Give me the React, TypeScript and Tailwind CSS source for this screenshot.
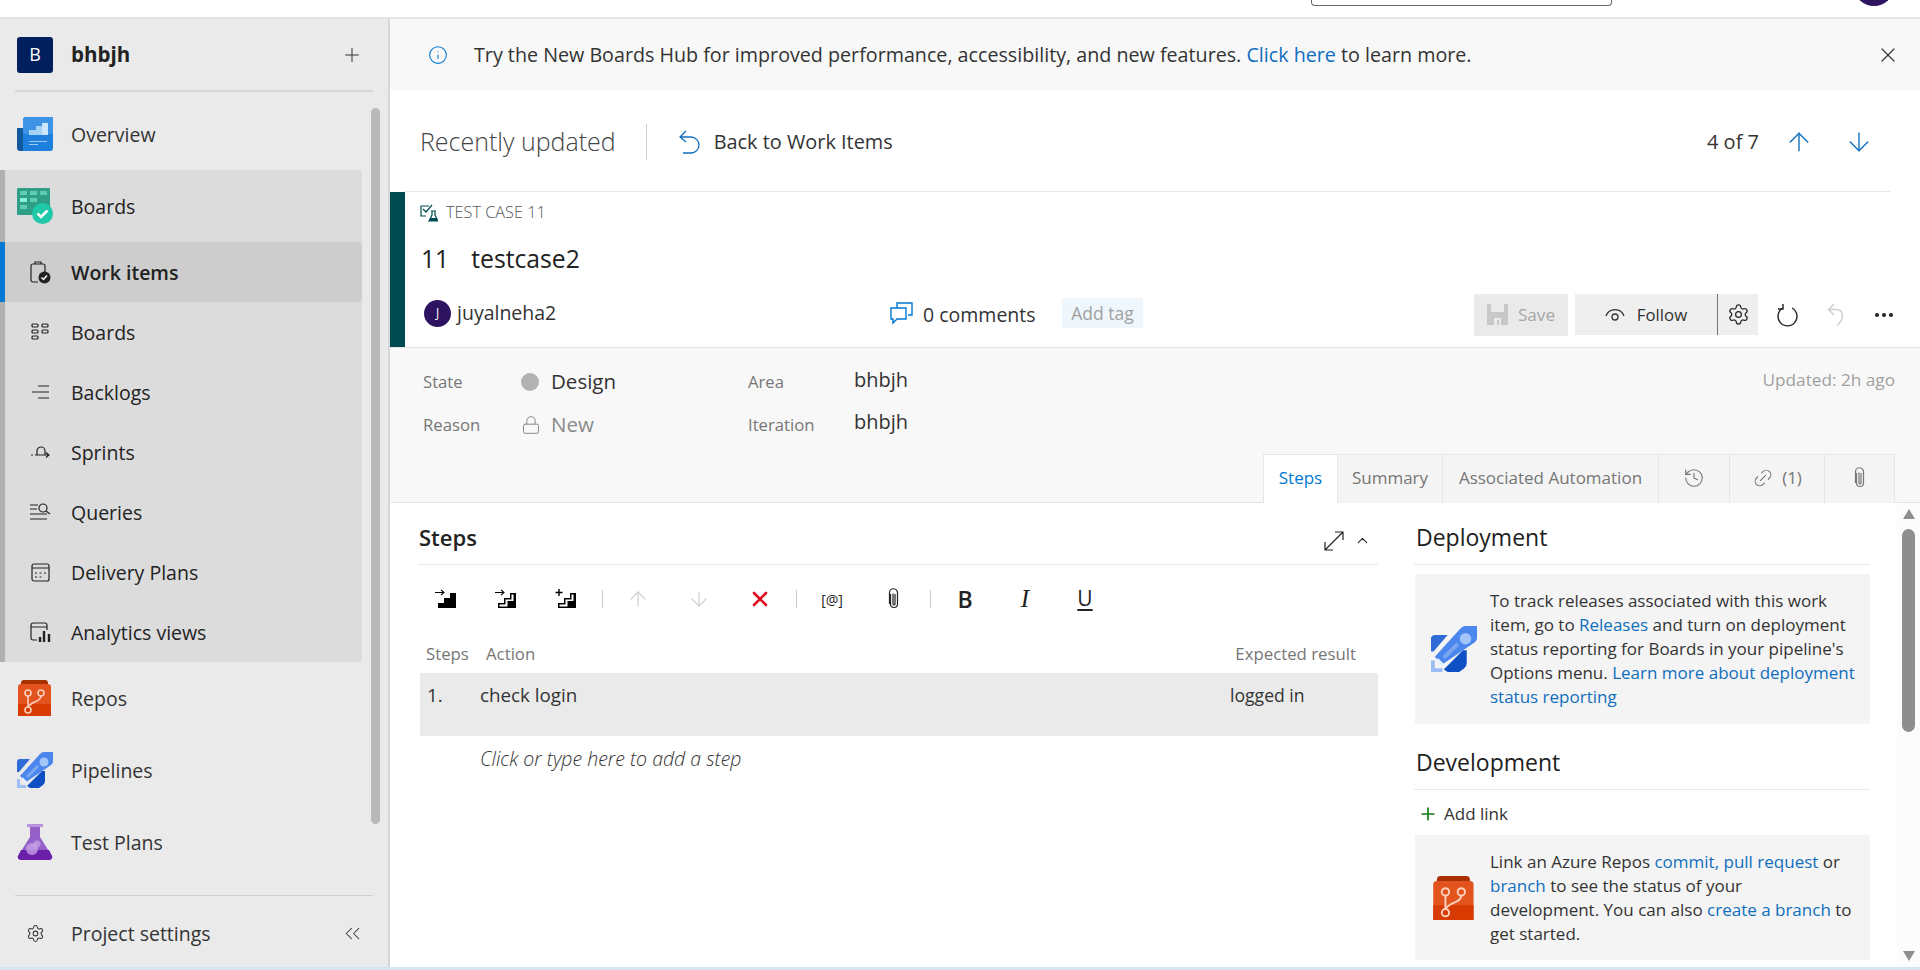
import React from "react";
import { ArrowUp, ArrowDown, ChevronUp, ChevronsLeft, History, Info, Link2, Lock, Plus, Settings, X } from "lucide-react";

const OverviewLogo = () => (
  <svg width="36" height="34" viewBox="0 0 36 34">
    <path d="M0 11h6v23H3a3 3 0 0 1-3-3z" fill="#125a9e" />
    <path d="M6 3a3 3 0 0 1 3-3h27v31a3 3 0 0 1-3 3H6z" fill="#1f7fdc" />
    <path d="M6 3a3 3 0 0 1 3-3h27v17H6z" fill="#3d93e6" />
    <path d="M12 13h7v5h-7zM19 9h6v9h-6z" fill="#a6d2f6" />
    <path d="M25 6h6v12h-6z" fill="#cde6fb" />
    <path d="M12 24h18v1H12zM12 27h9v1h-9z" fill="#9ccbf2" />
  </svg>
);

const BoardsLogo = () => (
  <svg width="36" height="36" viewBox="0 0 36 36">
    <rect width="33" height="27" rx="1" fill="#2f9e86" />
    <path d="M3 3h7v4H3zM13 3h7v4h-7zM23 3h7v4h-7z" fill="#5fcdb4" />
    <path d="M3 10h7v4H3z" fill="#8ef0d8" />
    <path d="M13 10h7v4h-7zM3 17h7v4H3z" fill="#5fcdb4" />
    <circle cx="25.5" cy="25.5" r="10.5" fill="#1fc8a8" />
    <path d="M20.5 25.5l3.5 3.5 6.5-6.5" stroke="#fff" strokeWidth="2.6" fill="none" />
  </svg>
);

const ReposLogo = ({ size = 36 }: { size?: number }) => (
  <svg width={size} height={size} viewBox="0 0 36 36">
    <path d="M4 3a3 3 0 0 1 3-3h21a3 3 0 0 1 3 3v4H4z" fill="#a93000" />
    <path d="M1 7a3 3 0 0 1 3-3h27a3 3 0 0 1 3 3v29H1z" fill="#e2531e" />
    <path d="M1 24h33v12H1z" fill="#d83b01" />
    <g stroke="#fbd0bd" strokeWidth="1.6" fill="none">
      <circle cx="11" cy="13" r="3" />
      <circle cx="24" cy="13" r="3" />
      <circle cx="11" cy="30" r="3" />
      <path d="M11 16v11M24 16c0 6-9 5-12 10" />
    </g>
  </svg>
);

const PipelinesLogo = ({ size = 36 }: { size?: number }) => (
  <svg width={size} height={size} viewBox="0 0 36 36">
    <path d="M0 9a3 3 0 0 1 3-2h10L2 20H0z" fill="#2f6bd4" />
    <path d="M13 36l-3-2 15-15h3v10a5 5 0 0 1-2 4l-4 3z" fill="#0f4fc4" />
    <path d="M9 30l-6-6L23 2a5 5 0 0 1 4-2h9v10a5 5 0 0 1-2 3z" fill="#4a86ee" />
    <circle cx="27" cy="10" r="4.5" fill="#a3c4f7" />
    <path d="M10 25l11-11" stroke="#7aa6f0" strokeWidth="3" />
    <path d="M0 27h3v6h6v3H0z" fill="#9cbcf5" />
    <path d="M5 26l5 5" stroke="#e6efff" strokeWidth="2" />
  </svg>
);

const TestPlansLogo = () => (
  <svg width="36" height="36" viewBox="0 0 36 36">
    <path d="M10 0h16v3H10z" fill="#b794e0" />
    <path d="M13 3h10v10l12 19a3 3 0 0 1-3 4H4a3 3 0 0 1-3-4l12-19z" fill="#9560c8" />
    <path d="M4 26h28l3 6a3 3 0 0 1-3 4H4a3 3 0 0 1-3-4z" fill="#6a1fa8" />
    <circle cx="15" cy="25" r="6" fill="#c9a6ea" opacity="0.75" />
    <circle cx="20" cy="20" r="3.5" fill="#c9a6ea" opacity="0.7" />
  </svg>
);

const StairIcon = ({ mode }: { mode: "insert" | "insertOutline" | "add" }) => (
  <svg width="22" height="20" viewBox="0 0 22 20">
    {mode === "add" ? (
      <path d="M4 0v7M.5 3.500h7" stroke="#000" strokeWidth="1.4" />
    ) : (
      <path d="M0 3.500h9M6 .8l3 2.700-3 2.700" stroke="#000" strokeWidth="1.1" fill="none" />
    )}
    {mode === "insert" ? (
      <path d="M3 19v-5h6V9h6V4h6v15z" fill="#000" />
    ) : (
      <>
        <path d="M3 19v-5h6V9h6V4h6v15z" fill="#000" />
        <path d="M4.500 17.500v-2h6v-5h6V5.500h2V12h-6v5.500z" fill="#fff" />
      </>
    )}
  </svg>
);

const TestCaseIcon = () => (
  <svg width="18" height="18" viewBox="0 0 18 18" fill="none">
    <path d="M9 2H1v10h5" stroke="#004b50" strokeWidth="1.2" />
    <path d="M3 5l3 3 6-7" stroke="#004b50" strokeWidth="1.2" />
    <path d="M11 7h5M12 7v4l-3 6h9l-3-6V7" stroke="#004b50" strokeWidth="1.2" />
    <path d="M10 14h7v3h-7z" fill="#004b50" />
  </svg>
);

const WorkItemsIcon = () => (
  <svg width="21" height="23" viewBox="0 0 21 23" fill="none">
    <path d="M8 21H3a2 2 0 0 1-2-2V5a2 2 0 0 1 2-2h10a2 2 0 0 1 2 2v6" stroke="#222" strokeWidth="1.2" />
    <path d="M5 3V1h6v2" stroke="#222" strokeWidth="1.2" />
    <circle cx="14.500" cy="16.500" r="6" fill="#222" />
    <path d="M11.500 16.500l2 2 3.500-4" stroke="#fff" strokeWidth="1.500" />
  </svg>
);

const BoardsIcon = () => (
  <svg width="19" height="18" viewBox="0 0 19 18" fill="none" stroke="#222" strokeWidth="1.200">
    <rect x="1" y="1" width="6" height="3" rx="1" />
    <rect x="11" y="1" width="6" height="3" rx="1" />
    <rect x="1" y="7" width="6" height="3" rx="1" />
    <rect x="11" y="7" width="6" height="3" rx="1" />
    <rect x="1" y="13" width="6" height="3" rx="1" />
  </svg>
);

const BacklogsIcon = () => (
  <svg width="19" height="16" viewBox="0 0 19 16" stroke="#222" strokeWidth="1.200">
    <path d="M7 2h11M1 8h17M7 14h11" />
  </svg>
);

const SprintsIcon = () => (
  <svg width="20" height="14" viewBox="0 0 20 14" fill="none" stroke="#222" strokeWidth="1.200">
    <path d="M1 10h2M5 10h14M16 7.500l3 2.500-3 2.500M7 10V6a4 4 0 0 1 8 0v4" />
  </svg>
);

const QueriesIcon = () => (
  <svg width="21" height="18" viewBox="0 0 21 18" fill="none" stroke="#222" strokeWidth="1.200">
    <path d="M0 2h8M0 6h7M0 11h17M0 16h17" />
    <circle cx="13" cy="5" r="4" />
    <path d="M16 8l4 3" />
  </svg>
);

const DeliveryIcon = () => (
  <svg width="19" height="19" viewBox="0 0 19 19" fill="none" stroke="#222" strokeWidth="1.200">
    <rect x="1" y="1" width="17" height="17" rx="2" />
    <path d="M1 5h17M4 10h2M8.500 10h2M13 10h2M4 14h2M8.500 14h2" />
  </svg>
);

const AnalyticsIcon = () => (
  <svg width="21" height="21" viewBox="0 0 21 21" fill="none" stroke="#222" strokeWidth="1.200">
    <path d="M7 18H3a2 2 0 0 1-2-2V3a2 2 0 0 1 2-2h12a2 2 0 0 1 2 2v5M1 5h16" />
    <path d="M10 20v-5M14 20V9M19 20v-8" strokeWidth="2.400" />
  </svg>
);

const BackIcon = ({ className }: { className: string }) => (
  <svg className={className} width="22" height="25" viewBox="0 0 22 25" fill="none" stroke="currentColor" strokeWidth="1.300">
    <path d="M8 1L2 7l6 5M2 7h11a7.500 7.500 0 0 1 0 16H5" />
  </svg>
);

const UndoIcon = ({ className }: { className: string }) => (
  <svg className={className} width="18" height="24" viewBox="0 0 18 24" fill="none" stroke="currentColor" strokeWidth="1.500">
    <path d="M7 1L1.500 6.500 7 12M1.500 6.500H9c8 0 9 9 1 16" />
  </svg>
);

const ClipIcon = ({ className }: { className?: string }) => (
  <svg className={className} width="14" height="22" viewBox="0 0 14 22" fill="none" stroke="currentColor" strokeWidth="1.200">
    <path d="M3.500 6v10a3.500 3.500 0 0 0 7 0V5a4 4 0 0 0-8-.5V16" />
    <path d="M6 5.500V16a1 1 0 0 0 2 0V6" />
  </svg>
);

const SubItem = ({ icon, label, active }: { icon: React.ReactNode; label: string; active?: boolean }) => (
  <div
    className={`flex items-center h-[60px] rounded-r-sm ${
      active ? "bg-[#cdcdcd] font-semibold -ml-[5px] pl-[5px] border-l-[5px] border-[#0078d4]" : ""
    }`}
  >
    <div className={`w-[66px] flex justify-center pl-[4px] ${active ? "-ml-[5px]" : ""}`}>{icon}</div>
    <span className="text-[#222] pt-[2px]">{label}</span>
  </div>
);

const MainItem = ({ icon, label }: { icon: React.ReactNode; label: string }) => (
  <div className="flex items-center h-[72px]">
    <div className="w-[71px] pl-[17px]">{icon}</div>
    <span className="text-[#333] pt-[2px]">{label}</span>
  </div>
);

const Sidebar = () => (
  <aside className="relative w-[390px] shrink-0 bg-[#eaeaea] border-r-2 border-[#d6d6d6] flex flex-col text-[19.500px]">
    <div className="mx-[15px] h-[73px] flex items-center border-b-2 border-[#d6d6d6]">
      <div className="ml-[2px] w-[36px] h-[36px] rounded-[3px] bg-[#001f5c] text-white text-[18px] flex items-center justify-center">
        B
      </div>
      <span className="ml-[18px] text-[20.500px] font-bold text-[#222]">bhbjh</span>
      <Plus className="ml-auto mr-[10px] text-[#333]" size={22} strokeWidth={1.1} />
    </div>
    <div className="h-[78px] pt-[6px]">
      <MainItem icon={<OverviewLogo />} label="Overview" />
    </div>
    <div className="w-[362px] border-l-[5px] border-[#b0b0b0] bg-[#dcdcdc] rounded-r-sm">
      <div className="flex items-center h-[72px] -ml-[5px]">
        <div className="w-[71px] pl-[17px]">
          <BoardsLogo />
        </div>
        <span className="text-[#222] pt-[2px]">Boards</span>
      </div>
      <SubItem icon={<WorkItemsIcon />} label="Work items" active />
      <SubItem icon={<BoardsIcon />} label="Boards" />
      <SubItem icon={<BacklogsIcon />} label="Backlogs" />
      <SubItem icon={<SprintsIcon />} label="Sprints" />
      <SubItem icon={<QueriesIcon />} label="Queries" />
      <SubItem icon={<DeliveryIcon />} label="Delivery Plans" />
      <SubItem icon={<AnalyticsIcon />} label="Analytics views" />
    </div>
    <MainItem icon={<ReposLogo />} label="Repos" />
    <MainItem icon={<PipelinesLogo />} label="Pipelines" />
    <MainItem icon={<TestPlansLogo />} label="Test Plans" />
    <div className="mt-auto mx-[15px] h-[72px] pt-[4px] flex items-center border-t border-[#d0d0d0]">
      <Settings className="ml-[11px] text-[#333]" size={19} strokeWidth={1.3} />
      <span className="ml-[26px] text-[#333]">Project settings</span>
      <ChevronsLeft className="ml-auto mr-[8px] text-[#444]" size={25} strokeWidth={1} />
    </div>
    <div className="absolute left-[371px] top-[89px] w-[9px] h-[716px] rounded-full bg-[#b9b9b9]" />
  </aside>
);

const Tab = ({ children, width, active }: { children: React.ReactNode; width: string; active?: boolean }) => (
  <div
    className={`${width} h-[49px] pb-[2px] flex items-center justify-center gap-[8px] border-r border-t border-[#e6e6e6] ${
      active ? "bg-white text-[#0078d4] -mb-px" : "bg-[#f4f4f4] text-[#767676]"
    }`}
  >
    {children}
  </div>
);

const Toolbtn = ({ children, width = "w-[60px]" }: { children: React.ReactNode; width?: string }) => (
  <div className={`${width} flex justify-center items-center`}>{children}</div>
);

const Sep = () => <div className="ml-[6px] mr-[4px] w-px h-[18px] bg-[#c8c8c8]" />;

const WorkItem = () => (
  <>
    <div className="flex border-b border-[#e4e4e4] h-[156px] shrink-0">
      <div className="w-[15px] bg-[#004b50]" />
      <div className="flex-1 mr-[30px] border-t border-[#e8e8e8] -mt-px pl-[15px] flex flex-col">
        <div className="flex items-center gap-[8px] h-[37px] pt-[4px] text-[16.300px] font-light text-[#555]">
          <TestCaseIcon />
          TEST CASE 11
        </div>
        <div className="h-[57px] pt-[2px] flex items-center text-[24.700px] text-[#222]">
          <span className="ml-px">11</span>
          <span className="ml-[22px]">testcase2</span>
        </div>
        <div className="flex items-center h-[44px] text-[19.500px] mt-[5px]">
          <div className="ml-[4px] w-[27px] h-[27px] rounded-full bg-[#2e1460] text-white text-[12px] flex items-center justify-center">
            J
          </div>
          <span className="ml-[6px] w-[433px] text-[#333]">juyalneha2</span>
          <svg className="text-[#0078d4]" width="23" height="24" viewBox="0 0 23 24" fill="none" stroke="currentColor" strokeWidth="1.400">
            <path d="M7 7V2h15v12h-4" />
            <path d="M1 7h15v11H7l-4 4v-4H1z" fill="#fff" />
          </svg>
          <span className="ml-[10px] w-[139px] mt-[3px] text-[#333]">0 comments</span>
          <div className="w-[81px] h-[30px] bg-[#eff6fc] text-[#a0a0a0] text-[17.500px] flex items-center justify-center">
            Add tag
          </div>
          <div className="ml-auto flex items-center mt-[3px] -mr-[3px]">
            <div className="w-[94px] h-[42px] bg-[#eaeaea] flex items-center justify-center gap-[10px] text-[#a6a6a6] text-[17.200px]">
              <svg width="21" height="21" viewBox="0 0 21 21">
                <path d="M0 0h21v21H0z" fill="#c8c8c8" />
                <path d="M4 0h13v8H4zM7 14h7v7H7z" fill="#eaeaea" />
                <path d="M10 16h2v5h-2z" fill="#c8c8c8" />
              </svg>
              Save
            </div>
            <div className="ml-[7px] w-[143px] h-[41px] bg-[#efefef] border-r border-[#777] flex items-center justify-center gap-[12px] text-[#333] text-[16.800px]">
              <svg width="20" height="14" viewBox="0 0 20 14" fill="none" stroke="currentColor" strokeWidth="1.300">
                <path d="M1 8a9.500 9.500 0 0 1 18 0" />
                <circle cx="10" cy="9" r="3" />
              </svg>
              Follow
            </div>
            <div className="w-[40px] h-[41px] bg-[#efefef] flex items-center justify-center">
              <Settings size={23} strokeWidth={1.3} className="text-[#222]" />
            </div>
            <svg className="ml-[19px] text-[#222]" width="22" height="24" viewBox="0 0 22 24" fill="none" stroke="currentColor" strokeWidth="1.400">
              <path d="M15 5a9.500 9.500 0 1 1-9 0" />
              <path d="M6 1v5H1" />
            </svg>
            <UndoIcon className="ml-[28px] text-[#cfcfcf]" />
            <svg className="ml-[30px]" width="18" height="4" viewBox="0 0 18 4" fill="#222">
              <circle cx="2" cy="2" r="2" />
              <circle cx="9" cy="2" r="2" />
              <circle cx="16" cy="2" r="2" />
            </svg>
          </div>
        </div>
      </div>
    </div>
    <div className="bg-[#f8f8f8] h-[155px] shrink-0 border-b border-[#e4e4e4] flex flex-col">
      <div className="flex pl-[33px] pr-[25px] h-[106px] pt-[12px] text-[16.700px] text-[#767676]">
        <div className="grid grid-cols-[98px_227px_106px_auto] grid-rows-[43px_43px] items-center h-fit">
          <span>State</span>
          <span className="flex items-center gap-[12px] text-[20.500px] text-[#333]">
            <span className="w-[18px] h-[18px] rounded-full bg-[#b2b2b2]" />
            Design
          </span>
          <span>Area</span>
          <span className="text-[20px] text-[#333] -mt-[4px]">bhbjh</span>
          <span>Reason</span>
          <span className="flex items-center gap-[10px] text-[20.500px] text-[#8a8a8a]">
            <Lock size={20} strokeWidth={1.2} />
            New
          </span>
          <span>Iteration</span>
          <span className="text-[20px] text-[#333] -mt-[5px]">bhbjh</span>
        </div>
        <span className="ml-auto text-[#a0a0a0] text-[17.200px] mt-[7px] h-fit">Updated: 2h ago</span>
      </div>
      <div className="flex justify-end pr-[25px] text-[17px] h-[48px]">
        <Tab width="w-[75px] border-l" active>
          Steps
        </Tab>
        <Tab width="w-[105px]">Summary</Tab>
        <Tab width="w-[216px]">Associated Automation</Tab>
        <Tab width="w-[71px]">
          <History size={22} strokeWidth={1.2} />
        </Tab>
        <Tab width="w-[95px]">
          <Link2 size={22} strokeWidth={1.2} className="-rotate-45" />
          (1)
        </Tab>
        <Tab width="w-[70px]">
          <ClipIcon />
        </Tab>
      </div>
    </div>
  </>
);

const StepsPanel = () => (
  <div className="w-[960px] ml-[28px] shrink-0">
    <div className="h-[62px] border-b border-[#e8e8e8] flex items-center pt-[8px] text-[#222]">
      <span className="text-[22px] font-semibold ml-px">Steps</span>
      <svg className="ml-auto mt-[6px]" width="20" height="20" viewBox="0 0 20 20" fill="none" stroke="#222" strokeWidth="1.200">
        <path d="M1 19L19 1M11 1h8v8M1 11v8h8" />
      </svg>
      <ChevronUp className="ml-[10px] mr-[7px] mt-[6px]" size={17} strokeWidth={1.5} />
    </div>
    <div className="h-[66px] flex items-center -ml-[2px] pt-[2px]">
      <Toolbtn><StairIcon mode="insert" /></Toolbtn>
      <Toolbtn><StairIcon mode="insertOutline" /></Toolbtn>
      <Toolbtn><StairIcon mode="add" /></Toolbtn>
      <Sep />
      <Toolbtn width="w-[61px]"><ArrowUp className="text-[#cfcfcf]" size={24} strokeWidth={1.2} /></Toolbtn>
      <Toolbtn width="w-[61px]"><ArrowDown className="text-[#cfcfcf]" size={24} strokeWidth={1.2} /></Toolbtn>
      <Toolbtn width="w-[61px]"><X className="text-[#e00b1c]" size={24} strokeWidth={2.6} /></Toolbtn>
      <Sep />
      <Toolbtn width="w-[62px]"><span className="text-[14px] text-[#222]">[@]</span></Toolbtn>
      <Toolbtn width="w-[61px]"><ClipIcon className="text-[#222]" /></Toolbtn>
      <Sep />
      <Toolbtn><span className="text-[23px] font-semibold text-[#222]">B</span></Toolbtn>
      <Toolbtn><span className="text-[25px] italic text-[#222] font-['Liberation_Serif']">I</span></Toolbtn>
      <Toolbtn><span className="text-[21px] underline underline-offset-[3px] text-[#222]">U</span></Toolbtn>
    </div>
    <div className="h-[42px] pt-[3px] flex items-center text-[16.800px] text-[#767676] pl-[8px]">
      <span className="w-[60px]">Steps</span>
      <span>Action</span>
      <span className="ml-auto mr-[22px]">Expected result</span>
    </div>
    <div className="ml-[2px] h-[63px] bg-[#eaeaea] flex pt-[8px] text-[18.800px] text-[#333]">
      <span className="ml-[7px] w-[53px]">1.</span>
      <span className="w-[750px]">check login</span>
      <span className="text-[17.600px] mt-px">logged in</span>
    </div>
    <div className="ml-[62px] mt-[8px] text-[19.500px] italic font-light text-[#333]">Click or type here to add a step</div>
  </div>
);

const InfoCard = ({ logo, children, height }: { logo: React.ReactNode; children: React.ReactNode; height: string }) => (
  <div className={`${height} bg-[#f4f4f4] flex items-center text-[17px] leading-[24px] text-[#333]`}>
    <div className="w-[75px] flex justify-center pl-[2px] shrink-0">{logo}</div>
    <div>{children}</div>
  </div>
);

const A = ({ children }: { children: React.ReactNode }) => <span className="text-[#106ebe]">{children}</span>;

const SidePanel = () => (
  <div className="w-[456px] ml-[36px] shrink-0">
    <div className="h-[62px] border-b border-[#e8e8e8] flex items-center pt-[8px] text-[23px] font-medium text-[#222] pl-[2px]">
      Deployment
    </div>
    <div className="mt-[9px] ml-px">
      <InfoCard height="h-[150px]" logo={<PipelinesLogo size={46} />}>
        To track releases associated with this work
        <br />
        item, go to <A>Releases</A> and turn on deployment
        <br />
        status reporting for Boards in your pipeline's
        <br />
        Options menu. <A>Learn more about deployment</A>
        <br />
        <A>status reporting</A>
      </InfoCard>
    </div>
    <div className="h-[66px] border-b border-[#e8e8e8] flex items-end pb-[10px] text-[23px] font-medium text-[#222] pl-[2px]">
      Development
    </div>
    <div className="h-[45px] pt-[3px] flex items-center text-[17px] text-[#333]">
      <Plus className="ml-[4px] mr-[6px] text-[#107c10]" size={20} strokeWidth={2} />
      Add link
    </div>
    <div className="ml-px">
      <InfoCard height="h-[125px]" logo={<ReposLogo size={44} />}>
        Link an Azure Repos <A>commit, pull request</A> or
        <br />
        <A>branch</A> to see the status of your
        <br />
        development. You can also <A>create a branch</A> to
        <br />
        get started.
      </InfoCard>
    </div>
  </div>
);

const Scrollbar = () => (
  <div className="absolute right-0 top-0 bottom-0 w-[23px] bg-[#fcfcfc] flex flex-col items-center">
    <div className="mt-[6px] w-0 h-0 border-x-[6px] border-x-transparent border-b-[10px] border-b-[#8e8e8e]" />
    <div className="mt-[10px] w-[13px] h-[203px] rounded-full bg-[#8e8e8e]" />
    <div className="mt-auto mb-[6px] w-0 h-0 border-x-[6px] border-x-transparent border-t-[10px] border-t-[#8e8e8e]" />
  </div>
);

export default function App() {
  return (
    <div className="w-[1920px] h-[970px] overflow-hidden bg-white flex flex-col font-['Open_Sans',sans-serif]">
      <div className="h-[19px] shrink-0 border-b-2 border-[#e4e4e4] flex items-start justify-end overflow-hidden">
        <div className="w-[301px] h-[6px] border border-t-0 border-[#666] rounded-b-sm mr-[242px]" />
        <div className="w-[40px] h-[40px] -mt-[34px] mr-[26px] rounded-full bg-[#2e1460]" />
      </div>
      <div className="flex flex-1 min-h-0">
        <Sidebar />
        <main className="flex-1 min-w-0 flex flex-col">
          <div className="h-[71px] shrink-0 bg-[#f8f8f8] flex items-center text-[19.700px] text-[#333]">
            <Info className="ml-[38px] text-[#0078d4]" size={20} strokeWidth={1.3} />
            <span className="ml-[26px]">
              Try the New Boards Hub for improved performance, accessibility, and new features.{" "}
              <span className="text-[#106ebe]">Click here</span> to learn more.
            </span>
            <X className="ml-auto mr-[20px] text-[#333]" size={24} strokeWidth={1.2} />
          </div>
          <div className="h-[102px] pt-[2px] shrink-0 flex items-center pl-[30px] pr-[46px]">
            <span className="text-[25px] font-light text-[#444]">Recently updated</span>
            <div className="ml-[30px] w-px h-[36px] bg-[#d0d0d0]" />
            <BackIcon className="ml-[31px] text-[#106ebe]" />
            <span className="ml-[14px] text-[19.900px] text-[#333]">Back to Work Items</span>
            <span className="ml-auto text-[20px] text-[#333]">4 of 7</span>
            <ArrowUp className="ml-[25px] text-[#106ebe]" size={30} strokeWidth={1.1} />
            <ArrowDown className="ml-[30px] text-[#106ebe]" size={30} strokeWidth={1.1} />
          </div>
          <WorkItem />
          <div className="relative flex flex-1 min-h-0 overflow-hidden">
            <StepsPanel />
            <SidePanel />
            <Scrollbar />
          </div>
        </main>
      </div>
      <div className="h-[3px] shrink-0 bg-[#d6e4f0]" />
    </div>
  );
}
